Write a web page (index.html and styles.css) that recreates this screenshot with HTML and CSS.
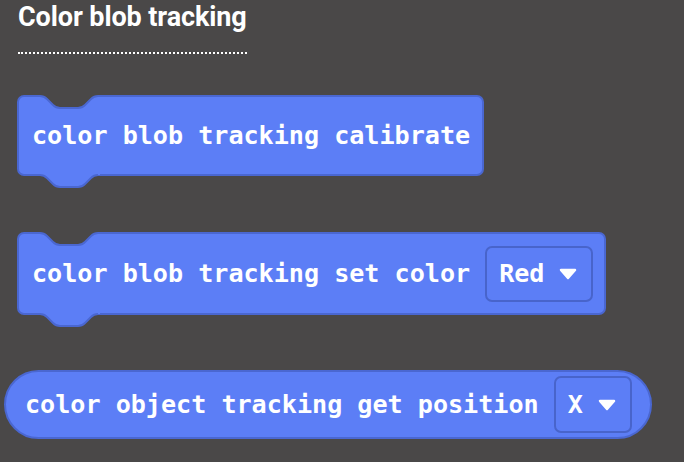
FILE: index.html
```html
<!DOCTYPE html>
<html lang="en">
<head>
<meta charset="utf-8">
<title>Color blob tracking</title>
<link rel="stylesheet" href="styles.css">
</head>
<body>
<div class="flyout">
  <div class="heading">Color blob tracking</div>

  <div class="block stmt b1">
    <svg class="notch" width="60" height="16" viewBox="0 0 60 16"><path class="notch-fill" d="M0 -1 H60 V1 H58 C54 1 53 2 51 4 L45 10 C43 12 42 13 38 13 H20 C16 13 15 12 13 10 L7 4 C5 2 4 1 0 1 Z"/><path class="notch-line" d="M0 1 C4 1 5 2 7 4 L13 10 C15 12 16 13 20 13 H38 C42 13 43 12 45 10 L51 4 C53 2 54 1 58 1 H60"/></svg>
    <span class="label">color blob tracking calibrate</span>
    <svg class="tab" width="60" height="16" viewBox="0 0 60 16"><path class="tab-fill" d="M0 -1 H60 V1 H58 C54 1 53 2 51 4 L45 10 C43 12 42 13 38 13 H20 C16 13 15 12 13 10 L7 4 C5 2 4 1 0 1 Z"/><path class="tab-line" d="M0 1 C4 1 5 2 7 4 L13 10 C15 12 16 13 20 13 H38 C42 13 43 12 45 10 L51 4 C53 2 54 1 58 1"/></svg>
  </div>

  <div class="block stmt b2">
    <svg class="notch" width="60" height="16" viewBox="0 0 60 16"><path class="notch-fill" d="M0 -1 H60 V1 H58 C54 1 53 2 51 4 L45 10 C43 12 42 13 38 13 H20 C16 13 15 12 13 10 L7 4 C5 2 4 1 0 1 Z"/><path class="notch-line" d="M0 1 C4 1 5 2 7 4 L13 10 C15 12 16 13 20 13 H38 C42 13 43 12 45 10 L51 4 C53 2 54 1 58 1 H60"/></svg>
    <span class="label">color blob tracking set color</span>
    <span class="dropdown dd-red"><span class="dd-text">Red</span><svg class="arrow" width="18" height="12" viewBox="0 0 18 12"><path d="M2 2 H16 L9 10 Z"/></svg></span>
    <svg class="tab" width="60" height="16" viewBox="0 0 60 16"><path class="tab-fill" d="M0 -1 H60 V1 H58 C54 1 53 2 51 4 L45 10 C43 12 42 13 38 13 H20 C16 13 15 12 13 10 L7 4 C5 2 4 1 0 1 Z"/><path class="tab-line" d="M0 1 C4 1 5 2 7 4 L13 10 C15 12 16 13 20 13 H38 C42 13 43 12 45 10 L51 4 C53 2 54 1 58 1"/></svg>
  </div>

  <div class="block reporter">
    <span class="label">color object tracking get position</span>
    <span class="dropdown dd-x"><span class="dd-text">X</span><svg class="arrow" width="18" height="12" viewBox="0 0 18 12"><path d="M2 2 H16 L9 10 Z"/></svg></span>
  </div>
</div>
</body>
</html>
```
FILE: styles.css
```css
html, body {
  margin: 0;
  padding: 0;
  background: #4a4848;
}

body {
  width: 684px;
  height: 462px;
  overflow: hidden;
}

.flyout {
  display: flex;
  flex-direction: column;
  align-items: flex-start;
  padding-top: 2px;
}

.heading {
  margin-left: 18px;
  font-family: Roboto, "Liberation Sans", sans-serif;
  font-weight: 700;
  font-size: 27px;
  line-height: 30px;
  letter-spacing: -0.1px;
  color: #ffffff;
  padding-bottom: 20px;
  border-bottom: 2px dotted #ffffff;
}

.block {
  position: relative;
  display: flex;
  align-items: center;
  box-sizing: border-box;
  background: #5c7ef6;
  border: 2px solid #4a67d1;
  font-family: "DejaVu Sans Mono", "Liberation Mono", monospace;
  font-weight: 700;
  font-size: 25.1px;
  color: #ffffff;
  white-space: pre;
}

.stmt {
  margin-left: 17px;
  border-radius: 7px;
  padding: 0 12px 0 13px;
}

.b1 {
  margin-top: 41px;
  height: 81px;
}

.b2 {
  margin-top: 56px;
  height: 83px;
  padding-right: 11px;
}

.reporter {
  margin-top: 55px;
  margin-left: 4px;
  height: 69px;
  border-radius: 35px;
  padding: 0 18px 0 19px;
}

.label {
  line-height: 30px;
}

.dropdown {
  display: flex;
  align-items: center;
  box-sizing: border-box;
  margin-left: 15px;
  border: 2px solid #4864cb;
  border-radius: 7px;
  padding: 0 14px 0 12px;
}

.dd-red {
  height: 56px;
}

.dd-x {
  height: 57px;
  margin-left: 15px;
}

.dd-text {
  line-height: 30px;
}

.arrow {
  margin-left: 15px;
  display: block;
}

.arrow path {
  fill: #ffffff;
  stroke: #ffffff;
  stroke-width: 2.5;
  stroke-linejoin: round;
}

.notch {
  position: absolute;
  top: -2px;
  left: 21px;
  overflow: visible;
}

.notch-fill {
  fill: #4a4848;
}

.notch-line {
  fill: none;
  stroke: #4a67d1;
  stroke-width: 2;
}

.tab {
  position: absolute;
  top: 100%;
  left: 21px;
  overflow: visible;
}

.tab-fill {
  fill: #5c7ef6;
}

.tab-line {
  fill: none;
  stroke: #4a67d1;
  stroke-width: 2;
}
```
